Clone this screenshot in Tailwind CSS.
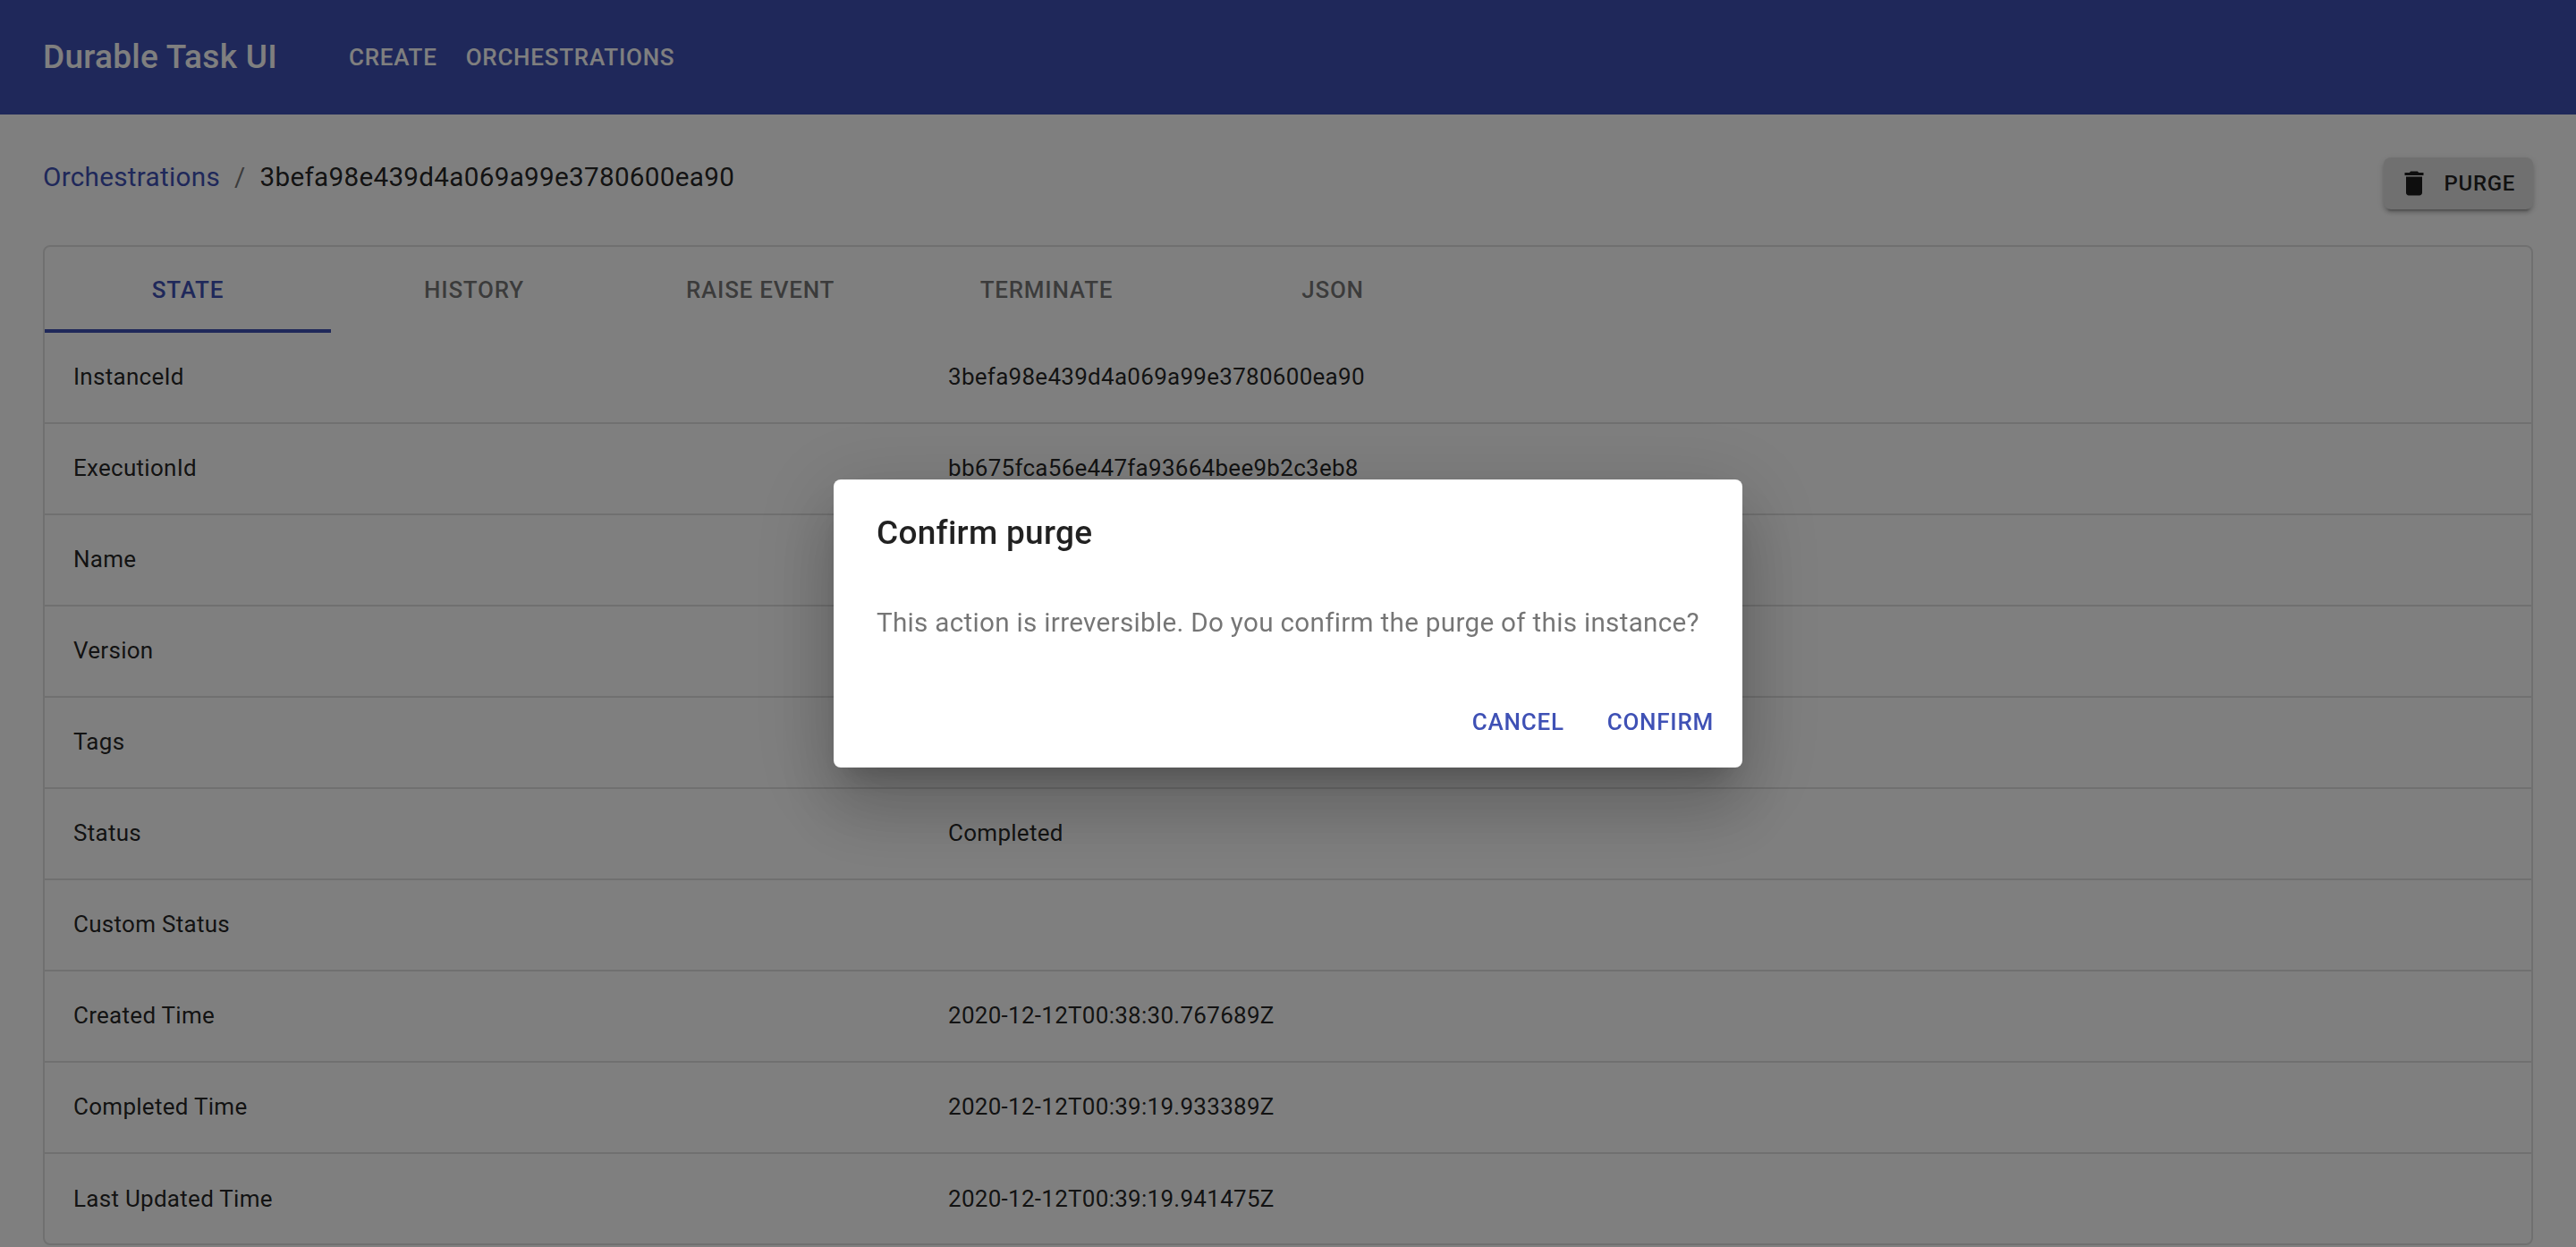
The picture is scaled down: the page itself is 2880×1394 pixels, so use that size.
<!DOCTYPE html>
<html lang="en">

<head>
    <meta charset="UTF-8" />
    <meta name="viewport" content="width=device-width, initial-scale=1.0" />
    <title>Durable Task UI</title>
    <script src="https://cdn.jsdelivr.net/npm/@tailwindcss/browser@4"></script>
</head>

<body class="bg-white h-[1394px] overflow-hidden font-['Roboto',sans-serif] text-black/87">
    <!-- App bar -->
    <header class="bg-[#3f51b5] h-[128px] px-[48px] flex items-center text-white">
        <h1 class="text-[37px] leading-[64px] font-medium tracking-[0.0075em] mr-[64px]">Durable Task UI</h1>
        <nav class="flex text-[26px] leading-[44px] font-medium tracking-[0.02857em] uppercase">
            <a class="px-[16px] py-[12px]">Create</a>
            <a class="px-[16px] py-[12px]">Orchestrations</a>
        </nav>
    </header>

    <main class="px-[48px]">
        <!-- Breadcrumb row -->
        <div class="flex items-start justify-between h-[146px] pt-[46px]">
            <div class="flex items-center text-[29.7px] leading-[48px] tracking-[0.00938em]">
                <a class="text-[#3f51b5]">Orchestrations</a>
                <span class="mx-[16px] text-black/54">/</span>
                <span>3befa98e439d4a069a99e3780600ea90</span>
            </div>
            <button class="h-[58px] mt-[2px] pl-[16px] pr-[20px] flex items-center rounded-[8px] bg-[#e0e0e0] text-[24px] font-medium tracking-[0.02857em] uppercase shadow-[0_6px_2px_-4px_rgba(0,0,0,0.2),0_4px_4px_0_rgba(0,0,0,0.14),0_2px_10px_0_rgba(0,0,0,0.12)]">
                <svg class="w-[36px] h-[36px] mr-[16px]" viewBox="0 0 24 24" fill="currentColor">
                    <path d="M6 19c0 1.1.9 2 2 2h8c1.1 0 2-.9 2-2V7H6v12zM19 4h-3.5l-1-1h-5l-1 1H5v2h14V4z" />
                </svg>
                Purge
            </button>
        </div>

        <!-- Card -->
        <section class="border-2 border-black/12 rounded-[8px]">
            <div class="flex h-[96px] text-[26px] font-medium tracking-[0.02857em] uppercase text-black/54">
                <div class="relative w-[320px] flex items-center justify-center text-[#3f51b5]">
                    State
                    <span class="absolute left-0 right-0 bottom-0 h-[4px] bg-[#3f51b5]"></span>
                </div>
                <div class="w-[320px] flex items-center justify-center">History</div>
                <div class="w-[320px] flex items-center justify-center">Raise Event</div>
                <div class="w-[320px] flex items-center justify-center">Terminate</div>
                <div class="w-[320px] flex items-center justify-center">Json</div>
            </div>

            <div class="text-[26px] tracking-[0.01071em]">
                <div class="grid grid-cols-[978px_1fr] h-[102px] items-center px-[32px] pb-[2px] border-b-2 border-black/12">
                    <span>InstanceId</span><span>3befa98e439d4a069a99e3780600ea90</span>
                </div>
                <div class="grid grid-cols-[978px_1fr] h-[102px] items-center px-[32px] pb-[2px] border-b-2 border-black/12">
                    <span>ExecutionId</span><span>bb675fca56e447fa93664bee9b2c3eb8</span>
                </div>
                <div class="grid grid-cols-[978px_1fr] h-[102px] items-center px-[32px] pb-[2px] border-b-2 border-black/12">
                    <span>Name</span><span></span>
                </div>
                <div class="grid grid-cols-[978px_1fr] h-[102px] items-center px-[32px] pb-[2px] border-b-2 border-black/12">
                    <span>Version</span><span></span>
                </div>
                <div class="grid grid-cols-[978px_1fr] h-[102px] items-center px-[32px] pb-[2px] border-b-2 border-black/12">
                    <span>Tags</span><span></span>
                </div>
                <div class="grid grid-cols-[978px_1fr] h-[102px] items-center px-[32px] pb-[2px] border-b-2 border-black/12">
                    <span>Status</span><span>Completed</span>
                </div>
                <div class="grid grid-cols-[978px_1fr] h-[102px] items-center px-[32px] pb-[2px] border-b-2 border-black/12">
                    <span>Custom Status</span><span></span>
                </div>
                <div class="grid grid-cols-[978px_1fr] h-[102px] items-center px-[32px] pb-[2px] border-b-2 border-black/12">
                    <span>Created Time</span><span>2020-12-12T00:38:30.767689Z</span>
                </div>
                <div class="grid grid-cols-[978px_1fr] h-[102px] items-center px-[32px] pb-[2px] border-b-2 border-black/12">
                    <span>Completed Time</span><span>2020-12-12T00:39:19.933389Z</span>
                </div>
                <div class="grid grid-cols-[978px_1fr] h-[100px] items-center px-[32px]">
                    <span>Last Updated Time</span><span>2020-12-12T00:39:19.941475Z</span>
                </div>
            </div>
        </section>
    </main>

    <!-- Confirm dialog -->
    <div class="fixed inset-0 bg-black/50 flex items-center justify-center">
        <div class="w-[1016px] h-[322px] bg-white rounded-[8px] flex flex-col shadow-[0_22px_30px_-14px_rgba(0,0,0,0.2),0_48px_76px_6px_rgba(0,0,0,0.14),0_18px_92px_16px_rgba(0,0,0,0.12)]">
            <h2 class="px-[48px] pt-[28px] text-[37px] leading-[64px] font-medium tracking-[0.0075em]">Confirm purge</h2>
            <p class="px-[48px] pt-[44px] text-[29.7px] leading-[48px] tracking-[0.00938em] text-black/54">This action is irreversible. Do you confirm the purge of this instance?</p>
            <div class="mt-auto p-[16px] flex justify-end gap-[16px] text-[26px] font-medium tracking-[0.02857em] uppercase text-[#3f51b5]">
                <button class="h-[72px] px-[16px] pt-[2px] uppercase">Cancel</button>
                <button class="h-[72px] px-[16px] pt-[2px] uppercase">Confirm</button>
            </div>
        </div>
    </div>
</body>

</html>
